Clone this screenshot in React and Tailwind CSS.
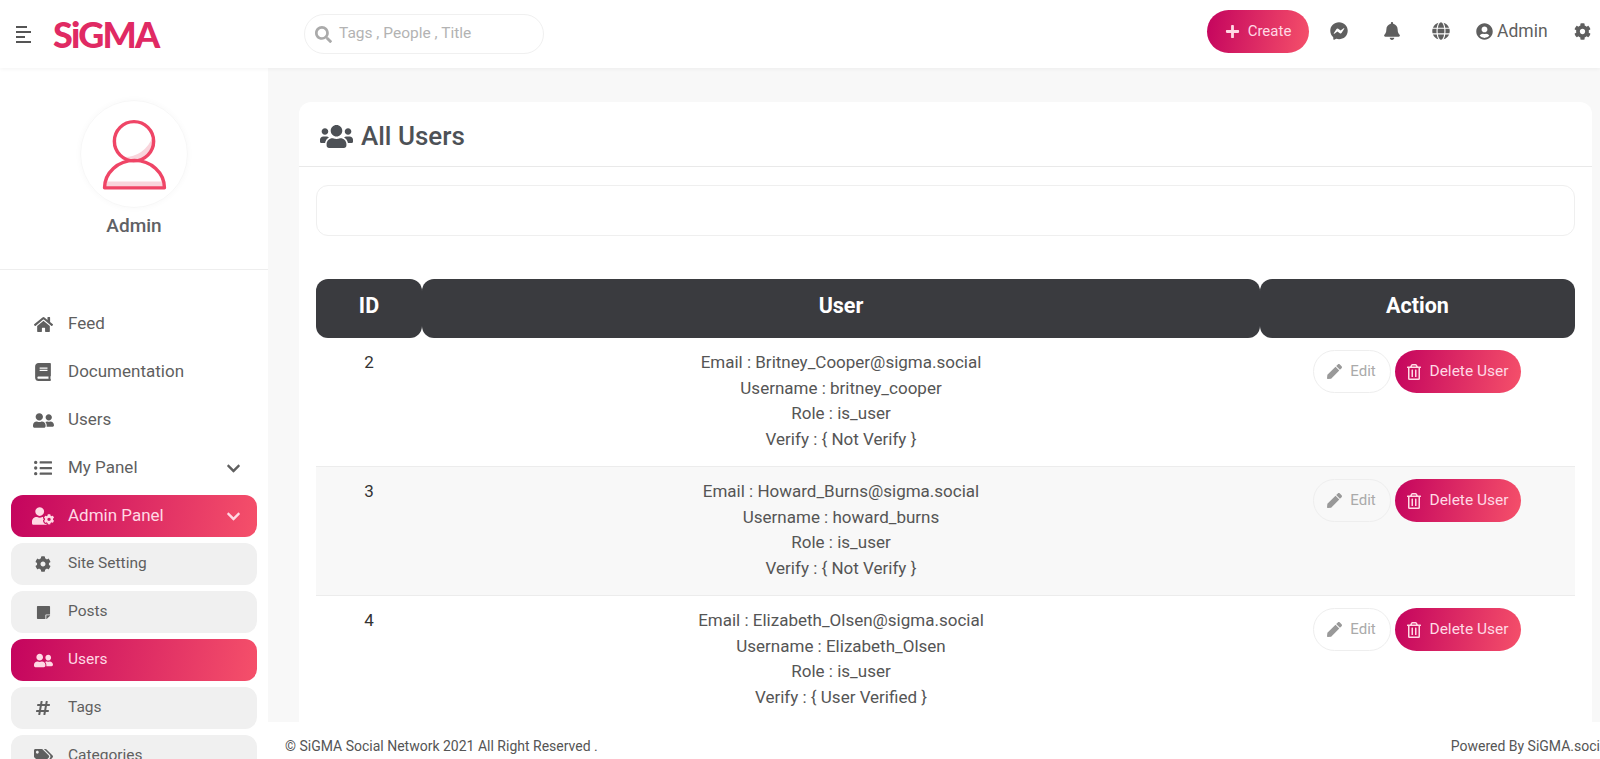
import {
  FaBell, FaBook, FaChevronDown, FaCog, FaFacebookMessenger, FaGlobe, FaHashtag, FaHome, FaListUl,
  FaPen, FaPlus, FaRegTrashAlt, FaSearch, FaStickyNote, FaTags, FaUserCircle, FaUserCog, FaUserFriends, FaUsers,
} from "react-icons/fa";

const gradient = "bg-[linear-gradient(100deg,#c4045e,#f5506a)] text-[#ffd9e4]";

const mainNav = [
  { label: "Feed", icon: FaHome, size: "text-[19px]" },
  { label: "Documentation", icon: FaBook, size: "text-[18px]" },
  { label: "Users", icon: FaUserFriends, size: "text-[21px]" },
  { label: "My Panel", icon: FaListUl, size: "text-[18px]", arrow: true },
  { label: "Admin Panel", icon: FaUserCog, size: "text-[22px]", arrow: true, active: true },
];

const subNav = [
  { label: "Site Setting", icon: FaCog, size: "text-[16px]" },
  { label: "Posts", icon: FaStickyNote, size: "text-[15px]" },
  { label: "Users", icon: FaUserFriends, size: "text-[19px]", active: true },
  { label: "Tags", icon: FaHashtag, size: "text-[16px]" },
  { label: "Categories", icon: FaTags, size: "text-[19px]" },
];

const users = [
  { id: 2, email: "Britney_Cooper@sigma.social", username: "britney_cooper", verify: "Not Verify" },
  { id: 3, email: "Howard_Burns@sigma.social", username: "howard_burns", verify: "Not Verify", shaded: true },
  { id: 4, email: "Elizabeth_Olsen@sigma.social", username: "Elizabeth_Olsen", verify: "User Verified" },
];

function Header() {
  return (
    <header className="relative z-10 flex h-[68px] shrink-0 items-center bg-white shadow-[0_1px_4px_rgba(0,0,0,0.05)]">
      <div className="ml-4 flex w-[15px] flex-col gap-[3px]">
        <span className="h-[2px] w-[11px] bg-[#555]"></span>
        <span className="h-[2px] w-[15px] bg-[#555]"></span>
        <span className="h-[2px] w-[9px] bg-[#555]"></span>
        <span className="h-[2px] w-[15px] bg-[#555]"></span>
      </div>
      <div className="ml-[22px] w-[251px] text-[36px] leading-none font-black tracking-[-1.8px] text-[#e02a63] font-['Lato',sans-serif]">SiGMA</div>
      <div className="flex h-10 w-[240px] items-center rounded-full border border-[#f0f0f0] pl-[10px] text-[#b3b3b3]">
        <FaSearch className="text-[17px] text-[#aaa]" />
        <span className="ml-[7px] text-[15.5px]">Tags , People , Title</span>
      </div>
      <div className="mb-[6px] flex items-center">
        <div className={`ml-[663px] flex h-[43px] w-[102px] items-center justify-center gap-2 rounded-full text-[15px] ${gradient}`}>
          <FaPlus className="text-[15px]" />
          Create
        </div>
        <FaFacebookMessenger className="ml-[21px] text-[18px] text-[#5f5f5f]" />
        <FaBell className="ml-[35px] text-[18px] text-[#5f5f5f]" />
        <FaGlobe className="ml-[31px] text-[18px] text-[#5f5f5f]" />
        <FaUserCircle className="ml-[26px] text-[17px] text-[#5f5f5f]" />
        <span className="ml-1 text-[17.5px] text-[#5f5f5f]">Admin</span>
        <FaCog className="ml-[26px] text-[17px] text-[#5f5f5f]" />
      </div>
    </header>
  );
}

function Avatar() {
  return (
    <svg viewBox="0 0 108 108" className="h-full w-full" fill="none">
      <path d="M42 57 a20 20 0 0 0 31 -21 a30 30 0 0 1 -31 21z" fill="#f9d5dc" />
      <path d="M25 82 h59 l1 7 h-61z" fill="#f9d5dc" />
      <circle cx="54" cy="41" r="20" stroke="#ef4566" strokeWidth="3.5" />
      <path d="M24 88.5 a30.5 28 0 0 1 61 0z" stroke="#ef4566" strokeWidth="3.5" strokeLinejoin="round" />
    </svg>
  );
}

function Sidebar() {
  return (
    <aside className="w-[268px] shrink-0 overflow-hidden bg-white">
      <div className="flex h-[202px] flex-col items-center border-b border-[#eee] pt-[32px]">
        <div className="h-[108px] w-[108px] rounded-full border border-[#f7f7f7] shadow-[0_0_6px_rgba(0,0,0,0.03)]">
          <Avatar />
        </div>
        <div className="mt-[4px] text-[19px] font-medium text-[#5f6165]">Admin</div>
      </div>
      <nav className="flex flex-col gap-[6px] px-[11px] pt-[33px]">
        {mainNav.map((item) => (
          <div key={item.label} className={`flex h-[42px] shrink-0 items-center rounded-xl pl-[21px] pr-[16px] text-[17px] ${item.active ? gradient : "text-[#5f5f5f]"}`}>
            <span className={`flex w-[22px] justify-center ${item.size}`}><item.icon /></span>
            <span className="ml-[14px] flex-1">{item.label}</span>
            {item.arrow && <FaChevronDown className="text-[15px]" />}
          </div>
        ))}
        {subNav.map((item) => (
          <div key={item.label} className={`flex h-[42px] shrink-0 items-center rounded-xl pl-[21px] text-[15.5px] ${item.active ? gradient : "bg-[#f0f0f0] text-[#5f5f5f]"}`}>
            <span className={`flex w-[22px] justify-center ${item.size}`}><item.icon /></span>
            <span className="ml-[14px]">{item.label}</span>
          </div>
        ))}
      </nav>
    </aside>
  );
}

function UserRow({ user }) {
  return (
    <div className={`grid h-[129px] grid-cols-[106px_838px_1fr] border-b border-[#ececec] pt-[12px] text-[17px] leading-[25.5px] text-[#555] ${user.shaded ? "bg-[#f8f8f8]" : ""}`}>
      <div className="text-center text-[#333]">{user.id}</div>
      <div className="text-center">
        <div>Email : {user.email}</div>
        <div>Username : {user.username}</div>
        <div>Role : is_user</div>
        <div>Verify : {"{"} {user.verify} {"}"}</div>
      </div>
      <div className="flex justify-center gap-[4px] pr-[2px]">
        <div className="flex h-[43px] w-[78px] items-center justify-center gap-[8px] rounded-full border border-[#eee] text-[15px] text-[#aaa]">
          <FaPen className="text-[15px] text-[#999]" />
          Edit
        </div>
        <div className={`flex h-[43px] w-[126px] items-center justify-center gap-[7px] rounded-full text-[15.5px] ${gradient}`}>
          <FaRegTrashAlt className="text-[16px]" />
          Delete User
        </div>
      </div>
    </div>
  );
}

function UsersCard() {
  return (
    <section className="rounded-t-xl bg-white pb-8">
      <div className="flex h-[65px] items-center gap-2 border-b border-[#e9e9e9] pl-[21px] pt-[5px] text-[#4d5156]">
        <FaUsers className="text-[33px]" />
        <h1 className="text-[26px] font-medium">All Users</h1>
      </div>
      <div className="px-[17px]">
        <div className="mt-[18px] h-[51px] rounded-xl border border-[#efefef]"></div>
        <div className="mt-[43px] grid grid-cols-[106px_838px_1fr] text-center text-[21.5px] font-bold text-white">
          <div className="flex h-[59px] items-center justify-center rounded-xl bg-[#3a3b3f] pb-[5px]">ID</div>
          <div className="flex h-[59px] items-center justify-center rounded-xl bg-[#3a3b3f] pb-[5px]">User</div>
          <div className="flex h-[59px] items-center justify-center rounded-xl bg-[#3a3b3f] pb-[5px]">Action</div>
        </div>
        {users.map((user) => <UserRow key={user.id} user={user} />)}
      </div>
    </section>
  );
}

export default function App() {
  return (
    <div className="flex h-screen flex-col overflow-hidden bg-white font-['Roboto',sans-serif]">
      <Header />
      <div className="flex min-h-0 flex-1">
        <Sidebar />
        <div className="flex min-w-0 flex-1 flex-col">
          <main className="min-h-0 flex-1 overflow-hidden bg-[#f8f8f8] pl-[31px] pr-2 pt-[34px]">
            <UsersCard />
          </main>
          <footer className="flex h-[37px] w-[1343px] shrink-0 justify-between bg-white pl-[17px] pt-[14px] text-[14px] leading-5 text-[#555]">
            <span>© SiGMA Social Network 2021 All Right Reserved .</span>
            <span>Powered By SiGMA.social</span>
          </footer>
        </div>
      </div>
    </div>
  );
}
